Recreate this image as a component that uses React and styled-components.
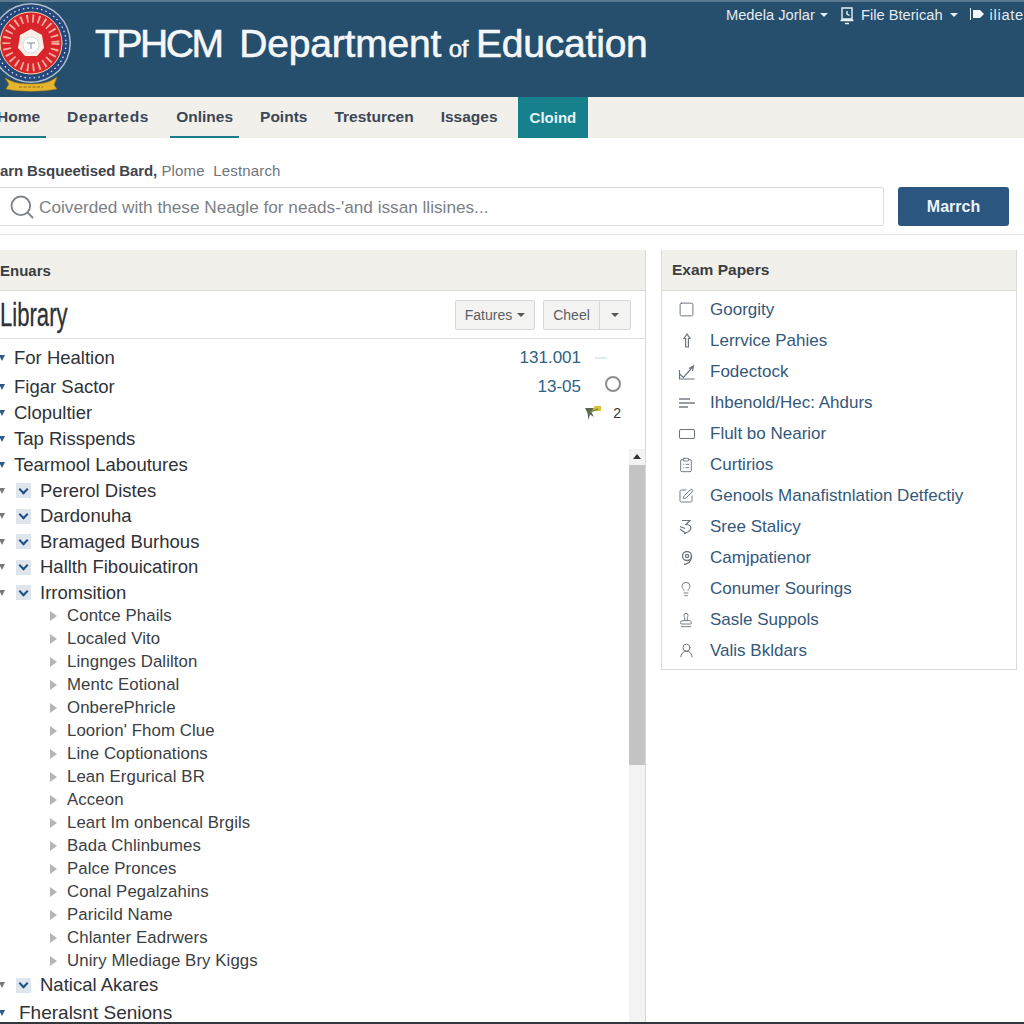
import React from 'react'
import styled, { createGlobalStyle } from 'styled-components'
import { Search, Square, RectangleHorizontal, ClipboardList, SquarePen, Lightbulb, Stamp, UserRound } from 'lucide-react'

const navItems = [
  { label: 'Home', line: true },
  { label: 'Departeds', wide: true },
  { label: 'Onlines', line: true },
  { label: 'Points' },
  { label: 'Tresturcen' },
  { label: 'Issages' },
]

const topRows = [
  { label: 'For Healtion', h: 26, value: '131.001', extra: 'dash' },
  { label: 'Figar Sactor', h: 26, mt: 3, value: '13-05', extra: 'ring' },
  { label: 'Clopultier', h: 26, extra: 'flag' },
  { label: 'Tap Risspends', h: 26 },
  { label: 'Tearmool Laboutures', h: 26 },
]

const checkedRows = ['Pererol Distes', 'Dardonuha', 'Bramaged Burhous', 'Hallth Fibouicatiron', 'Irromsition']

const childRows = [
  'Contce Phails',
  'Localed Vito',
  'Lingnges Dalilton',
  'Mentc Eotional',
  'OnberePhricle',
  "Loorion' Fhom Clue",
  'Line Coptionations',
  'Lean Ergurical BR',
  'Acceon',
  'Leart Im onbencal Brgils',
  'Bada Chlinbumes',
  'Palce Pronces',
  'Conal Pegalzahins',
  'Paricild Name',
  'Chlanter Eadrwers',
  'Uniry Mlediage Bry Kiggs',
]

const SmallArrow = () => (
  <svg width="18" height="18" viewBox="0 0 18 18" fill="none" stroke="#6b7480" strokeWidth="1.2">
    <path d="M9 2 L12 6.5 H10.4 V15 H7.6 V6.5 H6 Z" />
  </svg>
)

const CheckPencil = () => (
  <svg width="18" height="18" viewBox="0 0 18 18" fill="none" stroke="#6b7480" strokeWidth="1.2">
    <path d="M1 16 H16.5 M1.5 15.5 V7 M1.5 11 L5.5 14.5 L15.5 3 M11 5.5 L15.5 3 L14.5 8" />
  </svg>
)

const Lines = () => (
  <svg width="18" height="18" viewBox="0 0 18 18" fill="none" stroke="#757c86" strokeWidth="1.5">
    <path d="M1 5 H12 M1 9 H17 M1 13 H10" />
  </svg>
)

const ThreeMark = () => (
  <svg width="18" height="18" viewBox="0 0 18 18" fill="none" stroke="#6b7480" strokeWidth="1.2">
    <path d="M4 2.5 H12 L8 6.5 C12 6.5 14 9 12.5 11.5 C11 14 8 15 6 15.5 M2 11 L8 15.5 M2 8.5 L7 10.5" />
  </svg>
)

const NineMark = () => (
  <svg width="18" height="18" viewBox="0 0 18 18" fill="none" stroke="#6b7480" strokeWidth="1.3">
    <circle cx="9" cy="7" r="4.5" />
    <circle cx="9" cy="7" r="1.6" />
    <path d="M13.5 7 C13.5 12 10 15 6 15.5" />
  </svg>
)

const paperRows = [
  { label: 'Goorgity', icon: <Square size={17} strokeWidth={1.4} color="#6b7480" /> },
  { label: 'Lerrvice Pahies', icon: <SmallArrow /> },
  { label: 'Fodectock', icon: <CheckPencil /> },
  { label: 'Ihbenold/Hec: Ahdurs', icon: <Lines /> },
  { label: 'Flult bo Nearior', icon: <RectangleHorizontal size={18} strokeWidth={1.4} color="#6b7480" /> },
  { label: 'Curtirios', icon: <ClipboardList size={16} strokeWidth={1.4} color="#6b7480" /> },
  { label: 'Genools Manafistnlation Detfectiy', icon: <SquarePen size={16} strokeWidth={1.4} color="#6b7480" /> },
  { label: 'Sree Stalicy', icon: <ThreeMark /> },
  { label: 'Camjpatienor', icon: <NineMark /> },
  { label: 'Conumer Sourings', icon: <Lightbulb size={16} strokeWidth={1.4} color="#6b7480" /> },
  { label: 'Sasle Suppols', icon: <Stamp size={16} strokeWidth={1.4} color="#6b7480" /> },
  { label: 'Valis Bkldars', icon: <UserRound size={17} strokeWidth={1.4} color="#6b7480" /> },
]

const Seal = () => (
  <svg width="88" height="94" viewBox="0 0 88 94">
    <circle cx="40" cy="43" r="40" fill="#aebccb" />
    <circle cx="40" cy="43" r="38.5" fill="#24477c" />
    <circle cx="40" cy="43" r="35" fill="none" stroke="#dfe6ee" strokeWidth="1.2" strokeDasharray="1.6 3" />
    <circle cx="40" cy="43" r="31" fill="#d8242a" stroke="#f3d9a8" strokeWidth="1" />
    <circle cx="40" cy="43" r="24.5" fill="none" stroke="#f4c9b4" strokeWidth="8" strokeDasharray="1.8 4" opacity=".85" />
    <path d="M40 29 L51 35 L53 48 L46 56 H34 L27 48 L29 35 Z" fill="#f7efe6" />
    <circle cx="40" cy="45" r="8" fill="#fff" stroke="#d5dbe2" strokeWidth="1" />
    <path d="M36 43 H44 M40 43 V49" stroke="#7a8a9e" strokeWidth="1" />
    <path d="M14 78 C20 81 24 84 40 84 C56 84 60 81 66 77 L63 85 L66 89 C50 92 30 92 15 89 L18 84 Z" fill="#e6b52e" stroke="#a97f14" strokeWidth=".6" />
    <path d="M28 87 H52" stroke="#8a6a12" strokeWidth="1.2" strokeDasharray="3 1.5" />
  </svg>
)

const ClockStand = () => (
  <svg width="14" height="20" viewBox="0 0 14 20" fill="none" stroke="#e8eef3" strokeWidth="1.4">
    <path d="M2 3 H12 V14 H2 Z M0.5 15.5 H13.5 M5 18.5 H9 M7 6 V9 L9.5 10.5" />
  </svg>
)

const FlagMark = () => (
  <svg width="15" height="14" viewBox="0 0 15 14">
    <path d="M0.5 0 V12" stroke="#e8eef3" strokeWidth="1" />
    <path d="M3 2 H10 L14 6 L10 10 H3 Z" fill="#f4f7f9" />
  </svg>
)

const TinyBadge = () => (
  <svg width="18" height="16" viewBox="0 0 18 16">
    <path d="M10 1 H17 V6 H10 Z" fill="#d9c23c" />
    <path d="M1 3 H10 L7.5 7 L10 12 L6 9.5 L4.5 15 L3.5 8 Z" fill="#5f6650" />
    <path d="M6 7 L14 4" stroke="#7b8a3a" strokeWidth="1.4" />
  </svg>
)

const App = () => {
  return (
    <>
      <GlobalStyle />
      <Page>
        <Header>
          <Brand>
            <SealSlot><Seal /></SealSlot>
            <Title><Acronym>TPHCM</Acronym> Department <small>of</small> Education</Title>
          </Brand>
          <TopLinks>
            <TopLink>Medela Jorlar <Caret $color="#e8eef3" /></TopLink>
            <TopLink $gap={7}><ClockStand /> File Btericah <Caret $color="#e8eef3" /></TopLink>
            <TopLink $spaced><FlagMark />iliate</TopLink>
          </TopLinks>
        </Header>

        <Nav>
          {navItems.map((item) => (
            <NavItem key={item.label} $line={item.line} $wide={item.wide}>{item.label}</NavItem>
          ))}
          <ActiveTab>Cloind</ActiveTab>
        </Nav>

        <Crumbs>
          <strong>arn Bsqueetised Bard,</strong> Plome&nbsp; Lestnarch
        </Crumbs>

        <SearchBar>
          <SearchField>
            <Search size={28} strokeWidth={1.6} color="#7d8388" />
            <span>Coiverded with these Neagle for neads-'and issan llisines...</span>
          </SearchField>
          <SearchButton>Marrch</SearchButton>
        </SearchBar>

        <Columns>
          <MainPanel>
            <PanelHead>Enuars</PanelHead>
            <LibraryBar>
              <LibraryTitle>Library</LibraryTitle>
              <Tools>
                <ToolButton>Fatures <Caret /></ToolButton>
                <SplitButton>
                  <span>Cheel</span>
                  <span><Caret /></span>
                </SplitButton>
              </Tools>
            </LibraryBar>
            <TreeBody>
              <Scrollbar>
                <ScrollArrow />
                <ScrollThumb />
              </Scrollbar>
              {topRows.map((row) => (
                <TopRow key={row.label} $h={row.h} $mt={row.mt}>
                  <Tick />
                  <RowLabel>{row.label}</RowLabel>
                  <RowEnd>
                    {row.value && <RowValue>{row.value}</RowValue>}
                    <RowMark>
                      {row.extra === 'dash' && <Dash />}
                      {row.extra === 'ring' && <Ring />}
                      {row.extra === 'flag' && <TinyBadge />}
                    </RowMark>
                    {row.extra === 'flag' && <Count>2</Count>}
                  </RowEnd>
                </TopRow>
              ))}
              {checkedRows.map((label) => (
                <CheckedRow key={label}>
                  <Tick $gray />
                  <CheckBox><CheckMark /></CheckBox>
                  <RowLabel>{label}</RowLabel>
                </CheckedRow>
              ))}
              <ChildList>
                {childRows.map((label) => (
                  <ChildRow key={label}>
                    <ChildArrow />
                    <ChildLabel>{label}</ChildLabel>
                  </ChildRow>
                ))}
              </ChildList>
              <CheckedRow>
                <Tick $gray />
                <CheckBox><CheckMark /></CheckBox>
                <RowLabel>Natical Akares</RowLabel>
              </CheckedRow>
              <LastRow>
                <Tick />
                <LastLabel>Fheralsnt Senions</LastLabel>
              </LastRow>
            </TreeBody>
          </MainPanel>

          <SidePanel>
            <SideHead>Exam Papers</SideHead>
            <PaperList>
              {paperRows.map((row) => (
                <PaperRow key={row.label}>
                  <PaperIcon>{row.icon}</PaperIcon>
                  <span>{row.label}</span>
                </PaperRow>
              ))}
            </PaperList>
          </SidePanel>
        </Columns>
        <BottomEdge />
      </Page>
    </>
  )
}

const GlobalStyle = createGlobalStyle`
  html, body {
    margin: 0;
    background: #fff;
    overflow: hidden;
  }
  * {
    box-sizing: border-box;
  }
  body {
    font-family: "Liberation Sans", Arial, sans-serif;
  }
`
const Page = styled.div`
  width: 1024px;
  height: 1024px;
  display: flex;
  flex-direction: column;
  overflow: hidden;
  background: #fff;
  color: #2c2f33;
`
const Header = styled.header`
  height: 97px;
  flex: none;
  display: flex;
  justify-content: space-between;
  background: #264e6d;
  border-top: 2px solid #5b7a92;
`
const Brand = styled.div`
  display: flex;
  align-items: flex-start;
`
const SealSlot = styled.div`
  width: 95px;
  height: 94px;
  margin: -2px 9px 0 -9px;
  flex: none;
`
const Title = styled.h1`
  margin: 20px 0 0;
  font-size: 39px;
  font-weight: 400;
  letter-spacing: -0.2px;
  word-spacing: -3px;
  line-height: 44px;
  color: #f4f7f9;
  white-space: nowrap;
  -webkit-text-stroke: 0.6px #f4f7f9;

  small {
    font-size: 24px;
  }
`
const Acronym = styled.span`
  letter-spacing: -2.4px;
  margin-right: 10px;
`
const TopLinks = styled.div`
  display: flex;
  gap: 12px;
  height: 26px;
  align-items: center;
  white-space: nowrap;
`
const TopLink = styled.span`
  display: flex;
  align-items: center;
  gap: ${(p) => p.$gap || 5}px;
  font-size: 14.7px;
  letter-spacing: ${(p) => (p.$spaced ? '0.7px' : '0')};
  color: #e4ebf0;
`
const Caret = styled.i`
  display: inline-block;
  width: 0;
  height: 0;
  border-left: 4px solid transparent;
  border-right: 4px solid transparent;
  border-top: 4px solid ${(p) => p.$color || '#555'};
`
const Nav = styled.nav`
  height: 41px;
  flex: none;
  display: flex;
  gap: 15px;
  margin-left: -9px;
  background: #f1f0ea;
`
const NavItem = styled.a`
  display: flex;
  align-items: center;
  padding: 0 6px;
  font-size: 15.5px;
  font-weight: 700;
  letter-spacing: ${(p) => (p.$wide ? '0.7px' : '0')};
  color: #3d4657;
  border-bottom: 2px solid ${(p) => (p.$line ? '#1b7c90' : 'transparent')};
`
const ActiveTab = styled.a`
  display: flex;
  align-items: center;
  padding: 0 12px;
  margin-left: -1px;
  font-size: 15px;
  font-weight: 700;
  color: #e8f4f4;
  background: #16808c;
`
const Crumbs = styled.div`
  flex: none;
  height: 49px;
  padding-top: 24px;
  font-size: 15px;
  letter-spacing: 0.15px;
  color: #70757b;
  white-space: nowrap;

  strong {
    letter-spacing: -0.1px;
    color: #3f444c;
  }
`
const SearchBar = styled.div`
  flex: none;
  height: 48px;
  display: flex;
  gap: 14px;
  padding-right: 15px;
  border-bottom: 1px solid #e4e4e4;
`
const SearchField = styled.div`
  width: 884px;
  height: 39px;
  display: flex;
  align-items: center;
  gap: 3px;
  padding-left: 8px;
  font-size: 17.2px;
  color: #7b8086;
  background: #fff;
  border: 1px solid #dcdcdc;
  border-left: none;
  border-radius: 0 3px 3px 0;
  white-space: nowrap;

  span {
    padding-top: 2px;
  }
`
const SearchButton = styled.button`
  width: 111px;
  height: 39px;
  font: 700 16px "Liberation Sans", Arial, sans-serif;
  color: #eef3f7;
  background: #2a5680;
  border: none;
  border-radius: 3px;
`
const Columns = styled.main`
  flex: 1;
  min-height: 0;
  display: flex;
  gap: 15px;
  padding: 15px 8px 0 0;
  overflow: hidden;
`
const MainPanel = styled.section`
  width: 646px;
  flex: none;
  display: flex;
  flex-direction: column;
  border-right: 1px solid #d8d8d8;
`
const PanelHead = styled.div`
  flex: none;
  height: 41px;
  display: flex;
  align-items: center;
  font-size: 15px;
  font-weight: 700;
  color: #3a3d42;
  background: #f1f0ea;
  border-bottom: 1px solid #d9d9d5;
`
const LibraryBar = styled.div`
  flex: none;
  height: 48px;
  display: flex;
  align-items: center;
  justify-content: space-between;
  padding-right: 14px;
  border-bottom: 1px solid #dedede;
`
const LibraryTitle = styled.h2`
  margin: 0;
  font-size: 33px;
  font-weight: 400;
  color: #2e3135;
  transform: scaleX(0.67);
  transform-origin: left center;
  -webkit-text-stroke: 0.3px #2e3135;
`
const Tools = styled.div`
  display: flex;
  gap: 8px;
`
const ToolButton = styled.div`
  height: 30px;
  width: 80px;
  display: flex;
  align-items: center;
  justify-content: center;
  gap: 5px;
  font-size: 14px;
  color: #5a5f65;
  background: #f3f3f1;
  border: 1px solid #d8d8d8;
  border-radius: 2px;
`
const SplitButton = styled(ToolButton)`
  width: 88px;
  gap: 0;

  span {
    display: flex;
    height: 100%;
    align-items: center;
    justify-content: center;
  }
  span:first-child {
    flex: 1;
    border-right: 1px solid #d8d8d8;
  }
  span:last-child {
    width: 30px;
  }
`
const TreeBody = styled.div`
  position: relative;
  flex: 1;
  min-height: 0;
  padding-top: 6px;
  overflow: hidden;
`
const Scrollbar = styled.div`
  position: absolute;
  top: 110px;
  right: 0;
  bottom: 0;
  width: 16px;
  background: #f3f3f3;
`
const ScrollArrow = styled.div`
  width: 0;
  height: 0;
  margin: 5px auto 6px;
  border-left: 4px solid transparent;
  border-right: 4px solid transparent;
  border-bottom: 5px solid #333;
`
const ScrollThumb = styled.div`
  height: 300px;
  background: #c3c3c3;
`
const TopRow = styled.div`
  height: ${(p) => p.$h}px;
  margin-top: ${(p) => p.$mt || 0}px;
  display: flex;
  align-items: center;
  padding-right: 24px;
`
const Tick = styled.i`
  flex: none;
  width: 0;
  height: 0;
  margin-right: 9px;
  margin-left: -1px;
  border-left: 3px solid transparent;
  border-right: 3px solid transparent;
  border-top: 6px solid ${(p) => (p.$gray ? '#777' : '#2e5a86')};
`
const RowLabel = styled.span`
  font-size: 18.5px;
  color: #2f3236;
  white-space: nowrap;
`
const LastLabel = styled(RowLabel)`
  margin-left: 5px;
  font-size: 19px;
`
const RowEnd = styled.div`
  margin-left: auto;
  display: flex;
  align-items: center;
`
const RowValue = styled.span`
  font-size: 17px;
  color: #2f6285;
`
const RowMark = styled.span`
  width: 40px;
  display: flex;
  justify-content: center;
`
const Dash = styled.i`
  width: 12px;
  height: 2px;
  background: #dcebf2;
`
const Ring = styled.i`
  width: 16px;
  height: 16px;
  margin: 0 0 7px 24px;
  border: 2px solid #8d8d8d;
  border-radius: 50%;
`
const Count = styled.span`
  font-size: 14px;
  color: #333;
`
const CheckedRow = styled.div`
  height: 25.5px;
  display: flex;
  align-items: center;
`
const CheckBox = styled.span`
  flex: none;
  width: 15px;
  height: 15px;
  margin: 0 9px 0 2px;
  display: flex;
  align-items: center;
  justify-content: center;
  background: #dfe5ec;
`
const CheckMark = styled.i`
  width: 7px;
  height: 7px;
  margin-top: -3px;
  border-right: 2.4px solid #1d4f80;
  border-bottom: 2.4px solid #1d4f80;
  transform: rotate(45deg);
`
const ChildList = styled.div`
  margin-top: -1px;
`
const ChildRow = styled.div`
  height: 23px;
  display: flex;
  align-items: center;
  padding-left: 50px;
`
const ChildArrow = styled.i`
  flex: none;
  width: 0;
  height: 0;
  margin-right: 10px;
  border-top: 5px solid transparent;
  border-bottom: 5px solid transparent;
  border-left: 7px solid #b5b5b5;
`
const ChildLabel = styled.span`
  font-size: 16.8px;
  letter-spacing: 0.1px;
  color: #3b3e43;
  white-space: nowrap;
`
const LastRow = styled(CheckedRow)`
  margin-top: 2px;
`
const SidePanel = styled.aside`
  width: 356px;
  flex: none;
  align-self: flex-start;
  border: 1px solid #dadada;
  border-top: none;
`
const SideHead = styled.div`
  height: 41px;
  display: flex;
  align-items: center;
  padding-left: 10px;
  font-size: 15.5px;
  font-weight: 700;
  color: #3a3d42;
  background: #f1f0ea;
  border-bottom: 1px solid #d9d9d5;
`
const PaperList = styled.ul`
  margin: 0;
  padding: 3px 0 3px;
  list-style: none;
`
const PaperRow = styled.li`
  height: 31px;
  display: flex;
  align-items: center;
  font-size: 17px;
  color: #35587a;
  white-space: nowrap;
`
const PaperIcon = styled.span`
  width: 48px;
  padding-left: 16px;
  flex: none;
  display: flex;
  align-items: center;
`
const BottomEdge = styled.div`
  flex: none;
  height: 2px;
  background: #33373b;
`

export default App
